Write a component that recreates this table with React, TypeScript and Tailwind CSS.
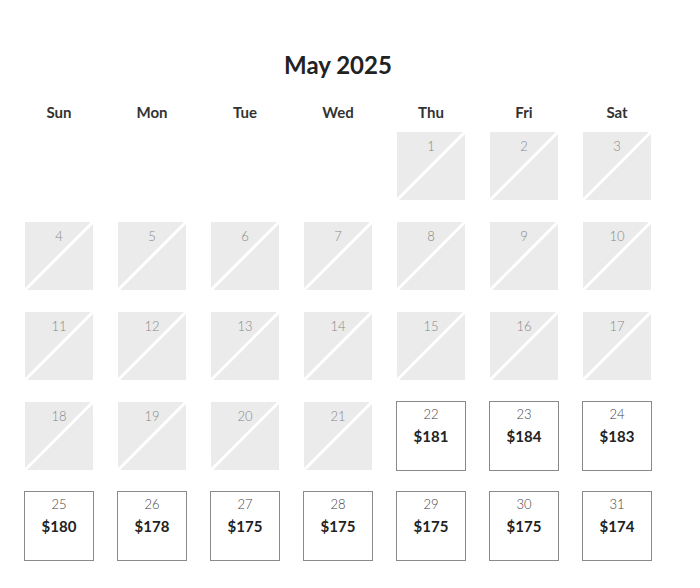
import React from 'react';

const prices: Record<number, number> = {
  22: 181, 23: 184, 24: 183, 25: 180, 26: 178, 27: 175, 28: 175, 29: 175, 30: 175, 31: 174,
};

const days = ['Sun', 'Mon', 'Tue', 'Wed', 'Thu', 'Fri', 'Sat'];

const DayCell: React.FC<{ day: number }> = ({ day }) => {
  const price = prices[day];
  if (price) {
    return (
      <div className="w-[70px] h-[70px] -mx-px -mt-px border border-[#8a8a8a] bg-white flex flex-col items-center pt-[4px]">
        <span className="text-[13px] leading-[16px] font-light text-[#444]">{day}</span>
        <span className="text-[15px] leading-[20px] font-bold text-[#222] mt-[4px]">${price}</span>
      </div>
    );
  }
  return (
    <div className="relative w-[68px] h-[68px] bg-[#ebebeb] flex justify-center pt-[6px] overflow-hidden">
      <svg className="absolute inset-0" width="68" height="68" viewBox="0 0 68 68">
        <line x1="-2" y1="70" x2="70" y2="-2" stroke="#fff" strokeWidth="3" />
      </svg>
      <span className="relative text-[13px] leading-[16px] font-light text-[#888]">{day}</span>
    </div>
  );
};

export default function App() {
  const cells: (number | null)[] = [null, null, null, null];
  for (let d = 1; d <= 31; d++) cells.push(d);

  return (
    <div className="w-[700px] h-[588px] bg-white pl-[25px] pt-[50px]" style={{ fontFamily: 'Lato, "Noto Sans", sans-serif' }}>
      <div className="w-[626px]">
        <h1 className="text-center text-[24px] leading-[30px] font-bold text-[#222]">May 2025</h1>
        <div className="grid grid-cols-[repeat(7,68px)] gap-x-[25px] mt-[22px]">
          {days.map((d) => (
            <div key={d} className="text-center text-[15px] leading-[20px] font-bold text-[#333]">{d}</div>
          ))}
        </div>
        <div className="grid grid-cols-[repeat(7,68px)] gap-x-[25px] gap-y-[22px] mt-[10px]">
          {cells.map((d, i) => (
            <div key={i} className="w-[68px] h-[68px]">
              {d !== null && <DayCell day={d} />}
            </div>
          ))}
        </div>
      </div>
    </div>
  );
}
